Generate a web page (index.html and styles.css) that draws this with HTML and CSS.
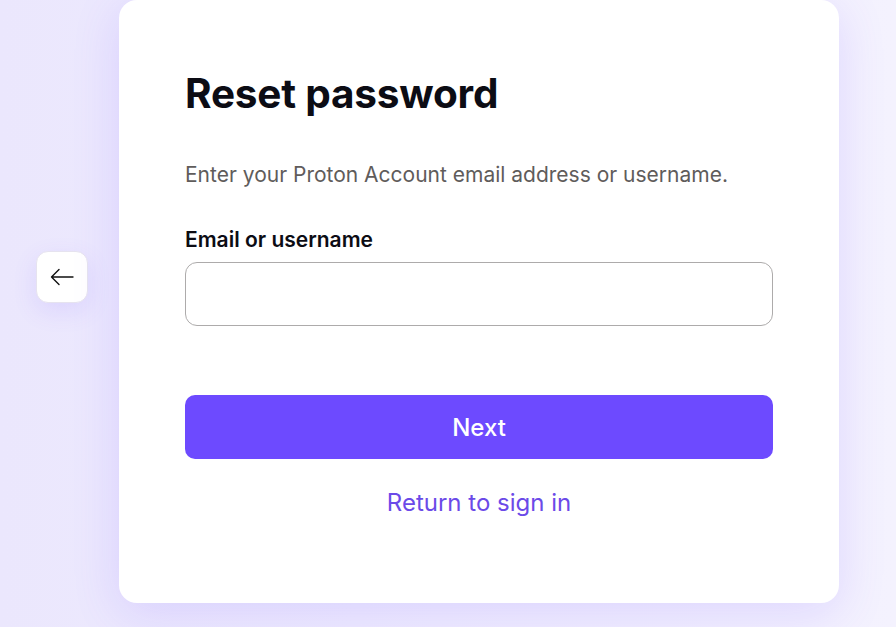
FILE: index.html
```html
<!DOCTYPE html>
<html lang="en">
<head>
<meta charset="utf-8">
<title>Reset password</title>
<link rel="stylesheet" href="styles.css">
</head>
<body>
<div class="page">
  <button class="back" aria-label="Back">
    <svg width="24" height="18" viewBox="0 0 24 18" fill="none" stroke="#111" stroke-width="1.4" stroke-linecap="round" stroke-linejoin="round"><path d="M23 9H1.5M9 1.5L1.5 9 9 16.5"/></svg>
  </button>
  <main class="card">
    <h1 class="title">Reset password</h1>
    <p class="lead">Enter your Proton Account email address or username.</p>
    <label class="label" for="user">Email or username</label>
    <input class="field" id="user" type="text">
    <button class="primary">Next</button>
    <a class="link" href="#">Return to sign in</a>
  </main>
</div>
</body>
</html>
```
FILE: styles.css
```css
html, body { margin: 0; padding: 0; height: 100%; }
body {
  font-family: Inter, "Noto Sans", sans-serif;
  background: linear-gradient(90deg, #ebe7fd 0%, #eeebfe 40%, #f4f2fe 100%);
  overflow: hidden;
}
.page {
  display: flex;
  align-items: flex-start;
  padding-left: 36px;
  gap: 31px;
}
.back {
  margin-top: 251px;
  width: 52px;
  height: 52px;
  flex: none;
  border: 1px solid #e6e3ef;
  border-radius: 12px;
  background: #fff;
  display: flex;
  align-items: center;
  justify-content: center;
  padding: 0;
  box-shadow: 0 8px 24px rgba(109, 74, 255, 0.12);
}
.card {
  width: 720px;
  height: 603px;
  box-sizing: border-box;
  background: #fff;
  border-radius: 18px;
  padding: 66px 66px 0;
  display: flex;
  flex-direction: column;
  box-shadow: 0 10px 48px rgba(109, 74, 255, 0.16);
}
.title {
  margin: 0;
  font-size: 40.5px;
  line-height: 56px;
  font-weight: 700;
  color: #0c0c14;
  letter-spacing: -0.2px;
}
.lead {
  margin: 38px 0 0;
  font-size: 21px;
  line-height: 30px;
  color: #5f5c5b;
}
.label {
  margin-top: 36px;
  font-size: 21px;
  line-height: 28px;
  font-weight: 600;
  color: #0c0c14;
}
.field {
  margin-top: 8px;
  height: 64px;
  box-sizing: border-box;
  border: 1px solid #adabab;
  border-radius: 12px;
  font: inherit;
  font-size: 20px;
  padding: 0 16px;
}
.primary {
  margin-top: 69px;
  height: 64px;
  border: 0;
  border-radius: 10px;
  background: #6d4aff;
  color: #fff;
  font: inherit;
  font-size: 24px;
  font-weight: 500;
}
.link {
  margin-top: 28px;
  align-self: center;
  font-size: 24px;
  line-height: 32px;
  color: #6b4ae8;
  text-decoration: none;
}
```
